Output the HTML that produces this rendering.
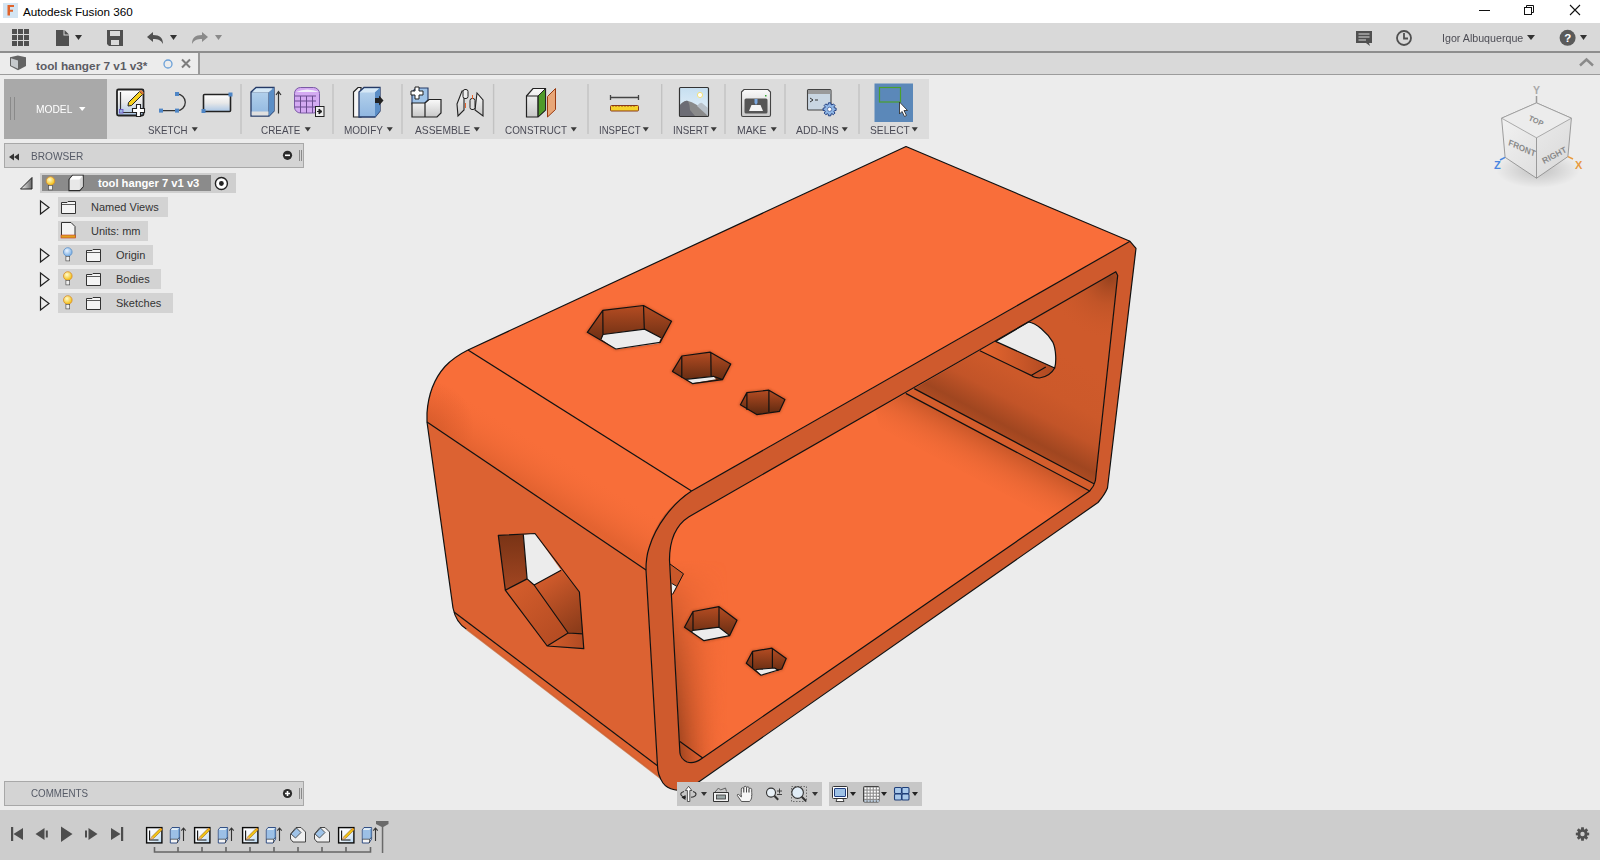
<!DOCTYPE html>
<html><head><meta charset="utf-8">
<style>
*{margin:0;padding:0;box-sizing:border-box}
html,body{width:1600px;height:860px;overflow:hidden;background:#ececec;font-family:"Liberation Sans",sans-serif;position:relative}
.a{position:absolute}
.t{position:absolute;white-space:nowrap;line-height:1}
svg{position:absolute;overflow:visible}
</style></head><body>

<!-- title bar -->
<div class="a" style="left:0;top:0;width:1600px;height:23px;background:#fff"></div>
<!-- toolbar -->
<div class="a" style="left:0;top:23px;width:1600px;height:28px;background:#d9d9d9"></div>
<div class="a" style="left:0;top:51px;width:1600px;height:2px;background:#8e8e8e"></div>
<!-- tab row -->
<div class="a" style="left:0;top:53px;width:1600px;height:21px;background:#d9d9d9"></div>
<div class="a" style="left:0;top:53px;width:198px;height:21px;background:#ececec"></div>
<div class="a" style="left:198px;top:53px;width:2px;height:21px;background:#9a9a9a"></div>
<div class="a" style="left:0;top:74px;width:1600px;height:1px;background:#9c9c9c"></div>

<!-- ribbon -->
<div class="a" style="left:4px;top:79px;width:925px;height:60px;background:#dcdcdc"></div>
<div class="a" style="left:4px;top:79px;width:103px;height:60px;background:#a9a9a9"></div>

<!-- browser header -->
<div class="a" style="left:4px;top:143px;width:300px;height:25px;background:#d4d4d4;border:1px solid #a8a8a8"></div>

<!-- comments -->
<div class="a" style="left:4px;top:781px;width:300px;height:25px;background:#d4d4d4;border:1px solid #a8a8a8"></div>

<!-- timeline -->
<div class="a" style="left:0;top:810px;width:1600px;height:50px;background:#cdcdcd"></div>

<svg width="1600" height="860" viewBox="0 0 1600 860" style="left:0;top:0">
<defs>
<radialGradient id="gFil" gradientUnits="userSpaceOnUse" cx="426" cy="428" r="48">
<stop offset="0" stop-color="#d85b2b"/><stop offset=".5" stop-color="#ea6533"/><stop offset="1" stop-color="#f86e39"/>
</radialGradient>
<linearGradient id="gWall" gradientUnits="userSpaceOnUse" x1="1000" y1="434.3" x2="1047" y2="346">
<stop offset="0" stop-color="#ad4b22"/><stop offset="0.1" stop-color="#a04620"/><stop offset="0.35" stop-color="#c25428"/><stop offset="0.6" stop-color="#cc592a"/><stop offset="1" stop-color="#cf5a2b"/>
</linearGradient>
<linearGradient id="gJun" gradientUnits="userSpaceOnUse" x1="1000" y1="443.5" x2="976" y2="488">
<stop offset="0" stop-color="#c75628" stop-opacity=".95"/><stop offset=".4" stop-color="#dc6130" stop-opacity=".6"/><stop offset="1" stop-color="#f76d38" stop-opacity="0"/>
</linearGradient>
<linearGradient id="gLeftShade" gradientUnits="userSpaceOnUse" x1="676" y1="0" x2="728" y2="0">
<stop offset="0" stop-color="#923e1b"/><stop offset=".4" stop-color="#c05227" stop-opacity=".7"/><stop offset="1" stop-color="#f76d38" stop-opacity="0"/>
</linearGradient>
<linearGradient id="gMaskY" gradientUnits="userSpaceOnUse" x1="0" y1="560" x2="0" y2="760">
<stop offset="0" stop-color="#000"/><stop offset=".3" stop-color="#555"/><stop offset="1" stop-color="#fff"/>
</linearGradient>
<radialGradient id="gCorner" gradientUnits="userSpaceOnUse" cx="1110" cy="278" r="60">
<stop offset="0" stop-color="#8e3e1c" stop-opacity=".85"/><stop offset=".45" stop-color="#a84a22" stop-opacity=".35"/><stop offset="1" stop-color="#c85628" stop-opacity="0"/>
</radialGradient>
<linearGradient id="gStrip" gradientUnits="userSpaceOnUse" x1="980" y1="0" x2="1050" y2="0">
<stop offset="0" stop-color="#e6662f"/><stop offset=".6" stop-color="#c85628"/><stop offset="1" stop-color="#b04a22"/>
</linearGradient>
<linearGradient id="gBh1" gradientUnits="userSpaceOnUse" x1="0" y1="536" x2="0" y2="590"><stop offset="0" stop-color="#7a3416"/><stop offset="1" stop-color="#a34621"/></linearGradient>
<linearGradient id="gBh2" gradientUnits="userSpaceOnUse" x1="512" y1="585" x2="562" y2="642"><stop offset="0" stop-color="#d45d2c"/><stop offset="1" stop-color="#b34b22"/></linearGradient>
<linearGradient id="gBh3" gradientUnits="userSpaceOnUse" x1="548" y1="578" x2="582" y2="628"><stop offset="0" stop-color="#cf5a2b"/><stop offset="1" stop-color="#8c3c1a"/></linearGradient>
<linearGradient id="gBh4" gradientUnits="userSpaceOnUse" x1="550" y1="0" x2="584" y2="0"><stop offset="0" stop-color="#d25c2b"/><stop offset="1" stop-color="#b04a22"/></linearGradient>
<linearGradient id="gFilP" gradientUnits="userSpaceOnUse" x1="580" y1="420.8" x2="535.8" y2="491">
<stop offset="0" stop-color="#f86e39" stop-opacity="0"/><stop offset=".5" stop-color="#f06a36" stop-opacity="0"/><stop offset="1" stop-color="#d65c2b" stop-opacity=".6"/>
</linearGradient>
<mask id="mY" maskUnits="userSpaceOnUse" x="600" y="500" width="200" height="300"><rect x="600" y="500" width="200" height="300" fill="url(#gMaskY)"/></mask>
<linearGradient id="gHex" gradientUnits="userSpaceOnUse" x1="0" y1="0" x2="0" y2="1" >
<stop offset="0" stop-color="#b24a20"/><stop offset="1" stop-color="#5e2a12"/>
</linearGradient>
<linearGradient id="gH1" x1="0" y1="0" x2="0" y2="1"><stop offset="0" stop-color="#b54c22"/><stop offset="1" stop-color="#5a2810"/></linearGradient>
<linearGradient id="gFloor" gradientUnits="userSpaceOnUse" x1="675" y1="700" x2="760" y2="650">
<stop offset="0" stop-color="#b44a20"/><stop offset="1" stop-color="#f56c38" stop-opacity="0"/>
</linearGradient>
<filter id="blr" x="-20%" y="-20%" width="140%" height="140%"><feGaussianBlur stdDeviation="1.3"/></filter>
</defs>

<!-- left face -->
<path d="M427,422 L646,570 L657.5,765.8 L454,612 L453,608 Z" fill="#dc6232"/>
<!-- bottom fillet -->
<path d="M453,608 C455,618 460,625 466.3,629 L661.6,779 L657.5,765.8 L454,612 Z" fill="#dd6331"/>
<path d="M466.3,629 L661.6,779" stroke="#c9602f" stroke-width="1.6" fill="none" opacity=".8"/>
<!-- top fillet -->
<path d="M468,350 L691.6,491 C673,503 656,525 649,548 C646,557 646,564 646,570 L427,422 L427,413 C428,398 433,380 445,366.5 C452,359 460,354 468,350 Z" fill="url(#gFil)"/>
<path d="M468,350 L691.6,491 C673,503 656,525 649,548 C646,557 646,564 646,570 L427,422 L427,413 C428,398 433,380 445,366.5 C452,359 460,354 468,350 Z" fill="url(#gFilP)"/>
<!-- top face -->
<path d="M468,350 L906,146.5 L1130,241.3 L691.6,491 Z" fill="#f96e3a"/>

<!-- ring -->
<path fill-rule="evenodd" fill="#cf5a2d" d="M691.6,491 L1130,241.3 L1136,248.3 L1107.5,488 C1105,494 1101,499 1098,502.5 L688,789 C680,792 668,790 663,783 C659,777 657.5,770 657.5,765.8 L646,570 C646,540 660,510 691.6,491 Z
M689,516.7 C676,525 669.5,540 669.5,560 L679.9,752.8 C680,756 683,760 687,762 C691,763.5 697,762 701.8,758.5 L1089.7,491 C1092,488.5 1094.5,485 1095.4,480.7 L1117.7,275.4 L1115.8,271.7 Z"/>
<!-- interior floor -->
<path fill="#f76d38" d="M689,516.7 C676,525 669.5,540 669.5,560 L679.9,752.8 C680,756 683,760 687,762 C691,763.5 697,762 701.8,758.5 L1089.7,491 C1092,488.5 1094.5,485 1095.4,480.7 L1117.7,275.4 L1115.8,271.7 Z"/>
<path fill="url(#gLeftShade)" mask="url(#mY)" d="M669.5,560 L679.9,752.8 C680,756 683,760 687,762 C691,763.5 697,762 701.8,758.5 L740,732 L730,560 Z"/>
<path fill="url(#gJun)" d="M905.8,393.4 L1089.7,491 L1050,518 L880,428 L875,411 Z"/>
<!-- right wall interior -->
<path fill="url(#gWall)" d="M914.2,388.6 L1115.8,271.7 L1117.7,275.4 L1095.4,480.7 L1093.9,483.7 Z"/>
<path fill="url(#gCorner)" d="M914.2,388.6 L1115.8,271.7 L1117.7,275.4 L1095.4,480.7 L1093.9,483.7 Z"/>
<path fill="#d45d2c" d="M905.8,393.4 L914.2,388.6 L1093.9,483.7 L1089.7,491 Z"/>
<!-- round hole -->
<path fill="#ececec" d="M995.6,341.4 L1028.5,322 C1036,323 1047,332 1053,342.4 C1056,349 1056.5,362 1054.7,368 Z"/>
<path fill="url(#gStrip)" d="M979.9,350.8 L995.6,341.4 L1054.7,368 C1052,373 1046,377 1039.5,378 C1036,378 1033,377 1031.1,375.4 Z"/>

<g fill="none" stroke="#9a3f1a" stroke-width="3" opacity=".45" filter="url(#blr)">
<path d="M587.3,332.3 L602.8,310.4 L643.5,305.5 L671.5,321.3 L660.1,342.4 L615.8,349 Z"/>
<path d="M672.5,371.4 L681.8,356 L710.3,352.2 L730.7,364.1 L722.5,379.6 L692.4,383.6 Z"/>
<path d="M740.4,404.8 L746.9,392.6 L768.9,390.2 L784.9,399.4 L779.5,411.3 L756.7,414.6 Z"/>
<path d="M684.5,627.2 L693,611.5 L719,606.7 L737,620.2 L729.7,635.6 L704,640.7 Z"/>
<path d="M746.3,663.3 L752.6,651.3 L772,648.2 L786.2,658.6 L781.8,669 L761,675.2 Z"/>
</g>
<!-- top hex 1 -->
<path fill="url(#gH1)" d="M587.3,332.3 L602.8,310.4 L643.5,305.5 L671.5,321.3 L660.1,342.4 L615.8,349 Z"/>
<path fill="#ececec" d="M603,334.5 L644.6,329.1 L660.9,337.7 L658.7,343.5 L615.5,349.2 L601.1,339 Z"/>
<!-- top hex 2 -->
<path fill="url(#gH1)" d="M672.5,371.4 L681.8,356 L710.3,352.2 L730.7,364.1 L722.5,379.6 L692.4,383.6 Z"/>
<path fill="#ececec" d="M685.9,379.3 L713.5,376.3 L716,379.3 L692.4,383.2 Z"/>
<!-- top hex 3 -->
<path fill="url(#gH1)" d="M740.4,404.8 L746.9,392.6 L768.9,390.2 L784.9,399.4 L779.5,411.3 L756.7,414.6 Z"/>

<!-- floor hex 1 -->
<path fill="url(#gH1)" d="M684.5,627.2 L693,611.5 L719,606.7 L737,620.2 L729.7,635.6 L704,640.7 Z"/>
<path fill="#ececec" d="M691.4,631.9 L693,630.3 L719,627.2 L729.7,635.6 L704,640.7 Z"/>
<!-- floor hex 2 -->
<path fill="url(#gH1)" d="M746.3,663.3 L752.6,651.3 L772,648.2 L786.2,658.6 L781.8,669 L761,675.2 Z"/>
<path fill="#ececec" d="M755.8,669.5 L774.6,668 L778.7,670.5 L761,675.2 Z"/>

<!-- big hex left face -->
<path fill="url(#gBh1)" d="M498.3,535.3 L523.3,534.4 L527.1,578.9 L505.3,590.2 Z"/>
<path fill="#ececec" d="M523.3,534.4 L535,533.5 L561.1,570.2 L534.1,585 L527.1,578.9 Z"/>
<path fill="url(#gBh2)" d="M505.3,590.2 L527.1,578.9 L534.1,585 L568.1,633 L547.2,646 Z"/>
<path fill="url(#gBh3)" d="M534.1,585 L561.1,570.2 L579.4,592 L582.9,633.8 L568.1,633 Z"/>
<path fill="url(#gBh4)" d="M547.2,646 L568.1,633 L582.9,633.8 L583.8,648.7 Z"/>

<!-- notch -->
<path fill="#c9582a" d="M670,564 L683.5,573.8 L675.7,591 L672,594 Z"/>
<path fill="#ececec" d="M671.6,583.3 L676.6,586.3 L672.4,594 L671.9,592 Z"/>

<!-- EDGE LINES -->
<g fill="none" stroke="#111" stroke-width="1.2" stroke-linejoin="round">
<path d="M468,350 L906,146.5 L1130,241.3 L1136,248.3 L1107.5,488 C1105,494 1101,499 1098,502.5 L690,788"/>
<path d="M468,350 L691.6,491"/>
<path d="M427,422 L646,570"/>
<path d="M468,350 C460,354 452,359 445,366.5 C433,380 428,398 427,413 L427,422 L453,608 C455,618 460,625 466.3,629"/>
<path d="M454,612 L657.5,765.8"/>
<path d="M691.6,491 L1130,241.3"/>
<path d="M691.6,491 C673,503 656,525 649,548 C646,557 646,564 646,570 L657.5,765.8 C657.5,770 659,777 663,783 C668,790 680,792 688,789"/>
<path d="M689,516.7 C676,525 669.5,540 669.5,560 L679.9,752.8 C680,756 683,760 687,762 C691,763.5 697,762 701.8,758.5 L1089.7,491 C1092,488.5 1094.5,485 1095.4,480.7 L1117.7,275.4 L1115.8,271.7 Z"/>
<path d="M905.8,393.4 L1089.7,491 M914.2,388.6 L1093.9,483.7"/>
<path d="M679.9,741.4 L702.7,758"/>
<path d="M670,564 L683.5,573.8 L672.6,594.5 M671.6,583.3 L676.6,586.3" stroke-width="1"/>
<path d="M995.6,341.4 L1028.5,322 C1036,323 1047,332 1053,342.4 C1056,349 1056.5,362 1054.7,368 Z"/>
<path d="M979.9,350.8 L1031.1,375.4 C1033,377 1036,378 1039.5,378 C1046,377 1052,373 1054.7,368 M1031.1,375.4 L1045.8,367"/>
<path d="M587.3,332.3 L602.8,310.4 L643.5,305.5 L671.5,321.3 L660.1,342.4 L615.8,349 Z M602.8,310.4 L603,334.5 M643.5,305.5 L644.3,329 M601.1,339 L603,334.5 L644.6,329.1 L660.9,337.7"/>
<path d="M672.5,371.4 L681.8,356 L710.3,352.2 L730.7,364.1 L722.5,379.6 L692.4,383.6 Z M681.8,356 L681.8,378 M710.8,352.2 L711.1,376.3 M685.9,379.3 L713.5,376.3 L722.5,379.6"/>
<path d="M740.4,404.8 L746.9,392.6 L768.9,390.2 L784.9,399.4 L779.5,411.3 L756.7,414.6 Z M746.9,392.6 L746.9,410 M768.9,390.2 L768.9,412"/>
<path d="M684.5,627.2 L693,611.5 L719,606.7 L737,620.2 L729.7,635.6 L704,640.7 Z M693,611.5 L693,630.3 M719,606.7 L719,627.2 M691.4,631.9 L693,630.3 L719,627.2 L729.7,635.6"/>
<path d="M746.3,663.3 L752.6,651.3 L772,648.2 L786.2,658.6 L781.8,669 L761,675.2 Z M752.6,651.3 L752.6,668.5 M772.4,648.2 L772.4,668 M755.8,669.5 L774.6,668 L778.7,670.5"/>
<path d="M498.3,535.3 L535,533.5 L579.4,592 L583.8,648.7 L547.2,646 L505.3,590.2 Z M523.3,534.4 L527.1,578.9 L505.3,590.2 M527.1,578.9 L534.1,585 L561.1,570.2 M534.1,585 L568.1,633 L547.2,646 M568.1,633 L582.9,633.8"/>
</g>
</svg>


<!-- title bar content -->
<svg style="left:0;top:0" width="1600" height="23">
<rect x="3" y="3" width="15" height="15" fill="#d3e5f3"/>
<path d="M7.5,5 L14,5 L14,7 L10,7 L10,9.8 L13,9.8 L13,11.8 L10,11.8 L10,15.5 L7.5,15.5 Z" fill="#e0642c"/>
<path d="M1479,10.5 H1490" stroke="#111" stroke-width="1"/>
<rect x="1524.5" y="7.5" width="7" height="7" fill="none" stroke="#111" stroke-width="1"/>
<path d="M1526.5,7.5 V5.5 H1533.5 V12.5 H1531.5" fill="none" stroke="#111" stroke-width="1"/>
<path d="M1570,5 L1580,15 M1580,5 L1570,15" stroke="#111" stroke-width="1.1"/>
</svg>
<div class="t" style="left:23px;top:5.8px;font-size:11.7px;color:#000">Autodesk Fusion 360</div>

<!-- toolbar icons -->
<svg style="left:0;top:23px" width="1600" height="30">
<g fill="#505050">
<rect x="12" y="6" width="5" height="5"/><rect x="18" y="6" width="5" height="5"/><rect x="24" y="6" width="5" height="5"/>
<rect x="12" y="12" width="5" height="5"/><rect x="18" y="12" width="5" height="5"/><rect x="24" y="12" width="5" height="5"/>
<rect x="12" y="18" width="5" height="5"/><rect x="18" y="18" width="5" height="5"/><rect x="24" y="18" width="5" height="5"/>
<path d="M56,7 H63.5 V12.5 H69 V23 H56 Z"/><path d="M64.5,7 L69,11.5 H64.5 Z"/>
<path d="M75,12 H82 L78.5,17 Z" fill="#333"/>
<path d="M107,7 H123 V23 H109 L107,21 Z"/>
<path d="M147,14 L153,9 V12 C160,12 163,15 163,21 C161,17 158,16 153,16 V19 Z"/>
<path d="M170,12 H177 L173.5,17 Z" fill="#333"/>
</g>
<rect x="110" y="8" width="10" height="5" fill="#d9d9d9"/>
<rect x="111" y="17" width="8" height="5" fill="#d9d9d9"/>
<path d="M208,14 L202,9 V12 C195,12 192,15 192,21 C194,17 197,16 202,16 V19 Z" fill="#8a8a8a"/>
<path d="M215,12 H222 L218.5,17 Z" fill="#8a8a8a"/>
<!-- right side -->
<path d="M1356,8 H1372 V20 H1369 L1370,23 L1366,20 H1356 Z" fill="#505050"/>
<path d="M1358.5,11 H1369.5 M1358.5,14 H1369.5 M1358.5,17 H1366" stroke="#d9d9d9" stroke-width="1.2"/>
<circle cx="1404" cy="15" r="7" fill="none" stroke="#505050" stroke-width="1.8"/>
<path d="M1404,10 V15.5 H1408" fill="none" stroke="#505050" stroke-width="1.8"/>
<path d="M1527,12 H1535 L1531,17 Z" fill="#333"/>
<circle cx="1567.6" cy="14.8" r="8" fill="#5a5a5a"/>
<path d="M1580,12 H1587 L1583.5,17 Z" fill="#333"/>
</svg>
<div class="t" style="left:1564.3px;top:32.5px;font-size:11.5px;font-weight:700;color:#fff">?</div>
<div class="t" style="left:1441.5px;top:33px;font-size:11px;color:#4d4d55;transform:scaleX(.97);transform-origin:0 0">Igor Albuquerque</div>

<!-- tab row -->
<svg style="left:0;top:53px" width="1600" height="22">
<path d="M10,4.3 L17.8,2.6 L26,4.3 V13 L18,17.2 L10,13 Z" fill="#646464"/>
<path d="M11,5.3 L18,7.6 V15.8 L11,12.4 Z" fill="#c6c9cc"/>
<circle cx="168" cy="11" r="4" fill="none" stroke="#6aa0d8" stroke-width="1.3"/>
<path d="M182,6.5 L190,14.5 M190,6.5 L182,14.5" stroke="#7d7d7d" stroke-width="2"/>
<path d="M1580,12.5 L1586.5,6.5 L1593,12.5" fill="none" stroke="#8a8a8a" stroke-width="2.4"/>
</svg>
<div class="t" style="left:36px;top:61px;font-size:11.8px;font-weight:700;color:#5b5b63">tool hanger 7 v1 v3*</div>

<!-- ribbon labels/separators -->
<svg style="left:0;top:79px" width="940" height="60">
<path d="M10.5,18 V41 M14.5,18 V41" stroke="#8a8a8a" stroke-width="1"/>
<path d="M79,28 H85.5 L82.2,32 Z" fill="#fff"/>
<g stroke="#c2c2c2" stroke-width="1.4">
<path d="M241,5 V55 M333,5 V55 M402,5 V55 M493.6,5 V55 M588,5 V55 M661.7,5 V55 M725,5 V55 M785,5 V55 M859,5 V55"/>
</g>
<g fill="#3a3a3a">
<path d="M191.7,48.3 H197.8 L194.75,52.6 Z"/><path d="M304.7,48.3 H310.8 L307.75,52.6 Z"/><path d="M386.7,48.3 H392.8 L389.75,52.6 Z"/>
<path d="M473.7,48.3 H479.8 L476.75,52.6 Z"/><path d="M570.7,48.3 H576.8 L573.75,52.6 Z"/><path d="M642.7,48.3 H648.8 L645.75,52.6 Z"/>
<path d="M710.7,48.3 H716.8 L713.75,52.6 Z"/><path d="M770.7,48.3 H776.8 L773.75,52.6 Z"/><path d="M841.7,48.3 H847.8 L844.75,52.6 Z"/>
<path d="M911.7,48.3 H917.8 L914.75,52.6 Z"/>
</g>
<rect x="874.5" y="4.5" width="38.5" height="38.5" fill="#5b88b9"/>
</svg>
<div class="t" style="left:36px;top:104px;font-size:11px;color:#fff;transform:scaleX(.93);transform-origin:0 0">MODEL</div>
<div style="position:absolute;left:0;top:124.7px;font-size:11px;color:#4a4a55;white-space:nowrap;line-height:1">
<span class="t" style="left:148px;transform:scaleX(0.885);transform-origin:0 0">SKETCH</span>
<span class="t" style="left:261px;transform:scaleX(0.9);transform-origin:0 0">CREATE</span>
<span class="t" style="left:344px;transform:scaleX(0.91);transform-origin:0 0">MODIFY</span>
<span class="t" style="left:415px;transform:scaleX(0.935);transform-origin:0 0">ASSEMBLE</span>
<span class="t" style="left:505px;transform:scaleX(0.897);transform-origin:0 0">CONSTRUCT</span>
<span class="t" style="left:599px;transform:scaleX(0.87);transform-origin:0 0">INSPECT</span>
<span class="t" style="left:673px;transform:scaleX(0.89);transform-origin:0 0">INSERT</span>
<span class="t" style="left:737px;transform:scaleX(0.944);transform-origin:0 0">MAKE</span>
<span class="t" style="left:796px;transform:scaleX(0.946);transform-origin:0 0">ADD-INS</span>
<span class="t" style="left:870px;transform:scaleX(0.93);transform-origin:0 0">SELECT</span>
</div>

<svg style="left:0;top:0" width="940" height="140">
<defs>
<linearGradient id="gSk" x1="0" y1="0" x2="0" y2="1"><stop offset="0" stop-color="#fff"/><stop offset=".5" stop-color="#e8e8e8"/><stop offset="1" stop-color="#a9c6e6"/></linearGradient>
<linearGradient id="gBlue" x1="0" y1="0" x2="0" y2="1"><stop offset="0" stop-color="#b9d5ee"/><stop offset="1" stop-color="#8fb6e0"/></linearGradient>
<linearGradient id="gWh" x1="0" y1="0" x2="0" y2="1"><stop offset="0" stop-color="#fafafa"/><stop offset="1" stop-color="#c8c8c8"/></linearGradient>
<linearGradient id="gSky" x1="0" y1="0" x2="0" y2="1"><stop offset="0" stop-color="#c6dff0"/><stop offset="1" stop-color="#e6f1fa"/></linearGradient>
</defs>
<!-- create sketch -->
<rect x="117" y="89.5" width="26.5" height="26" rx="1.5" fill="url(#gSk)" stroke="#222" stroke-width="1.8"/>
<path d="M120.5,92 V112.5 H132" fill="none" stroke="#333" stroke-width="1.2"/>
<rect x="119.5" y="109.5" width="3.5" height="3.5" fill="#9bb6e0" stroke="#6a4cc0" stroke-width=".8"/>
<path d="M128.5,102.5 L139.5,91.5 L142.5,94.5 L131.5,105.5 L128,106 Z" fill="#f5d01e" stroke="#222" stroke-width="1"/>
<path d="M139.5,91.5 L141,90 L144,93 L142.5,94.5 Z" fill="#e07b39"/>
<path d="M136.5,104.5 H140.5 V108.5 H144.5 V112.5 H140.5 V116.5 H136.5 V112.5 H132.5 V108.5 H136.5 Z" fill="#fff" stroke="#222" stroke-width="1.1"/>
<!-- line arc -->
<path d="M161,110.6 H177 M177,94 A8.3,8.3 0 0 1 177,110.6" fill="none" stroke="#333" stroke-width="1.3"/>
<rect x="159" y="108.6" width="4" height="4" fill="#4f86c6"/><rect x="175" y="108.6" width="4" height="4" fill="#4f86c6"/><rect x="175" y="92" width="4" height="4" fill="#4f86c6"/>
<!-- rect -->
<rect x="203.5" y="94.5" width="27" height="17" rx="1" fill="url(#gSk)" stroke="#222" stroke-width="1.6"/>
<rect x="201.5" y="109" width="4" height="4" fill="#4f86c6"/><rect x="228.5" y="92.5" width="4" height="4" fill="#4f86c6"/>
<!-- extrude -->
<path d="M251,92 L256,87.5 H274 V111 L269,116 H251 Z" fill="url(#gBlue)" stroke="#253a66" stroke-width="1.3"/>
<path d="M251,92 H269 L274,87.5 M269,92 V116" fill="none" stroke="#253a66" stroke-width="1"/>
<path d="M269,92 L274,87.5 V111 L269,116 Z" fill="#5b8ec6"/>
<path d="M252,92.6 L256.5,88.5 H273 L268.5,92.6 Z" fill="#d6e8f6"/>
<rect x="251.7" y="111.5" width="16.7" height="4" fill="#e0e0e0"/>
<path d="M278.5,91.5 V113.5 M276,95 L278.5,91.5 L281,95" fill="none" stroke="#333" stroke-width="1.2"/>
<!-- form -->
<rect x="294.5" y="87.5" width="25" height="25.5" rx="6" fill="#d4aaf2" stroke="#7b5aa6" stroke-width="1"/>
<path d="M296,92 Q307,87 319,92" fill="#f0f0f8"/>
<path d="M300.5,96 V113 M306.5,96 V113 M312.5,96 V113 M294.5,101 H316 M294.5,107 H316 M295,96 H316" stroke="#6b4c90" stroke-width="1"/>
<rect x="315.5" y="106.5" width="8.5" height="10" fill="#eee" stroke="#222" stroke-width="1"/>
<path d="M317,111.5 H320.5 M319,109 L322,111.5 L319,114 Z" fill="#222" stroke="#222" stroke-width="1"/>
<!-- modify -->
<path d="M353.5,92 L358,87.5 H361 V117 H353.5 Z" fill="#f5f5f5" stroke="#222" stroke-width="1.2"/>
<path d="M359,92 L364,87.5 H380 V111 L375,117 H359 Z" fill="url(#gBlue)" stroke="#253a66" stroke-width="1.3"/>
<path d="M375,92 L380,87.5 V111 L375,117 Z" fill="#5b8ec6"/>
<path d="M360,92.6 L364.5,88.5 H379 L374.5,92.6 Z" fill="#d6e8f6"/>
<path d="M375,98 H379 V95.5 L383.5,100.5 L379,105.5 V103 H375 Z" fill="#222"/>
<!-- assemble -->
<path d="M412,92 L416,88 H428 V100 L424,104 H412 Z" fill="#9fc3e8" stroke="#253a66" stroke-width="1.1"/>
<path d="M412,103 H425 V117 H412 Z M425,103 L429,99.5 H441 V113 L437,117 H425" fill="url(#gWh)" stroke="#222" stroke-width="1.2"/>
<path d="M415,87 H419 V91 H423 V95 H419 V99 H415 V95 H411 V91 H415 Z" fill="#fff" stroke="#222" stroke-width="1"/>
<path d="M457,104 L462,91 H464 V110 L458,116 Z" fill="url(#gWh)" stroke="#222" stroke-width="1.1"/>
<rect x="463" y="89.5" width="5" height="9" rx="2" fill="#eee" stroke="#222" stroke-width="1"/>
<path d="M477,93 L483,100 V116 L475,110 Z" fill="url(#gWh)" stroke="#222" stroke-width="1.1"/>
<rect x="470" y="98.5" width="5" height="11" rx="2" fill="#ddd" stroke="#222" stroke-width="1"/>
<path d="M465.5,103 V108 M472.5,95 V99" stroke="#e8642c" stroke-width="1"/>
<!-- construct -->
<path d="M526.5,96 L533,88.5 H545.5 V110 L538,117 H526.5 Z" fill="url(#gWh)" stroke="#222" stroke-width="1.2"/>
<path d="M538,96 L545.5,88.5 V110 L538,117 Z" fill="#4f9a2a" stroke="#222" stroke-width="1"/>
<path d="M526.5,96 H538 V117" fill="none" stroke="#222" stroke-width="1"/>
<path d="M547.5,96.5 L555.5,88.5 V109.5 L547.5,117 Z" fill="#e8a677" stroke="#9a3a10" stroke-width="1"/>
<!-- inspect -->
<path d="M610.5,97.5 H638.5 M610.5,95 V100 M638.5,95 V100" stroke="#444" stroke-width="1.3"/>
<rect x="610.5" y="105.5" width="28" height="5.5" rx="1" fill="#f6d22a" stroke="#8a3a1a" stroke-width="1"/>
<path d="M613,105.5 V107 M616,105.5 V107 M619,105.5 V107 M622,105.5 V107 M625,105.5 V107 M628,105.5 V107 M631,105.5 V107 M634,105.5 V107" stroke="#8a3a1a" stroke-width=".8"/>
<!-- insert -->
<rect x="679.5" y="87.5" width="29" height="29" rx="1" fill="url(#gSky)" stroke="#333" stroke-width="1.2"/>
<circle cx="700" cy="95" r="2.6" fill="#fff" stroke="#f3e27a" stroke-width="1"/>
<path d="M680,116 V105 Q685,100 688,101 Q695,102 708,114 V116 Z" fill="#8a8a8a"/>
<path d="M680,116 V105 Q685,100 688,101 Q690,105 690,110 L695,116 Z" fill="#6c6c74"/>
<path d="M697,106 Q700,102 702,103 L708,108 V116 Z" fill="#b8c0c8"/>
<!-- make -->
<path d="M741.5,92 L744,89.5 H768 L770.5,92 V115 Q770.5,116.5 769,116.5 H743 Q741.5,116.5 741.5,115 Z" fill="url(#gWh)" stroke="#444" stroke-width="1.1"/>
<rect x="744.5" y="98.5" width="23" height="15" rx="1.5" fill="#555"/>
<path d="M749,111 L751.5,105 H760.5 L763,111 Z" fill="#f4f4f4"/>
<path d="M754.5,99 H757.5 V103 L756,105 L754.5,103 Z" fill="#7aa8e0"/>
<rect x="765" y="95" width="1.5" height="1.5" fill="#3a3"/>
<!-- addins -->
<rect x="807.5" y="89.5" width="23.5" height="20.5" rx="1" fill="#c9d6e2" stroke="#444" stroke-width="1.1"/>
<rect x="808" y="90" width="22.5" height="4" fill="#9a9a9a"/>
<path d="M810,98 L813,100 L810,102 M815,100 H818" fill="none" stroke="#333" stroke-width="1"/>
<path d="M834.40,107.91 L836.10,108.14 L836.10,110.46 L834.40,110.69 L833.98,111.71 L835.01,113.07 L833.37,114.71 L832.01,113.68 L830.99,114.10 L830.76,115.80 L828.44,115.80 L828.21,114.10 L827.19,113.68 L825.83,114.71 L824.19,113.07 L825.22,111.71 L824.80,110.69 L823.10,110.46 L823.10,108.14 L824.80,107.91 L825.22,106.89 L824.19,105.53 L825.83,103.89 L827.19,104.92 L828.21,104.50 L828.44,102.80 L830.76,102.80 L830.99,104.50 L832.01,104.92 L833.37,103.89 L835.01,105.53 L833.98,106.89 Z" fill="#8fb6e6" stroke="#223f80" stroke-width="1"/>
<circle cx="829.6" cy="109.3" r="2.1" fill="#fff" stroke="#223f80" stroke-width=".6"/>
<!-- select -->
<rect x="879.5" y="87.5" width="21" height="14.5" fill="none" stroke="#4aa02c" stroke-width="1.2"/>
<path d="M899.5,102 V114 L902,111.5 L904.5,116.5 L906.5,115.5 L904,110.5 H907.5 Z" fill="#fff" stroke="#333" stroke-width=".9"/>
</svg>


<!-- browser header -->
<svg style="left:0;top:143px" width="310" height="26">
<path d="M9,14 L14,10.5 V17.5 Z M14,14 L19,10.5 V17.5 Z" fill="#333"/>
<circle cx="287.5" cy="12.3" r="4.6" fill="#2b2b2b"/>
<path d="M285,12.3 H290" stroke="#fff" stroke-width="1.6"/>
<path d="M299.5,7 V18 M301.5,7 V18" stroke="#8a8a8a" stroke-width="1"/>
</svg>
<div class="t" style="left:31px;top:151px;font-size:11px;color:#555a66;transform:scaleX(.92);transform-origin:0 0">BROWSER</div>

<!-- tree -->
<div class="a" style="left:40px;top:173px;width:196px;height:20px;background:#cfcfcf"></div>
<div class="a" style="left:42px;top:175px;width:169px;height:16px;background:#8b8b8b"></div>
<div class="a" style="left:58px;top:197px;width:110px;height:20px;background:#d3d3d3"></div>
<div class="a" style="left:58px;top:221px;width:90px;height:20px;background:#d3d3d3"></div>
<div class="a" style="left:58px;top:245px;width:95px;height:20px;background:#d3d3d3"></div>
<div class="a" style="left:58px;top:269px;width:103px;height:20px;background:#d3d3d3"></div>
<div class="a" style="left:58px;top:293px;width:115px;height:20px;background:#d3d3d3"></div>
<svg style="left:0;top:170px" width="240" height="150">
<defs><linearGradient id="gTri" x1="0" y1="0" x2="1" y2="0"><stop offset="0" stop-color="#fff"/><stop offset="1" stop-color="#666"/></linearGradient>
<radialGradient id="gBulb" cx=".4" cy=".35" r=".6"><stop offset="0" stop-color="#fffbd0"/><stop offset="1" stop-color="#f2c21c"/></radialGradient>
<radialGradient id="gBulbB" cx=".4" cy=".35" r=".6"><stop offset="0" stop-color="#eef6ff"/><stop offset="1" stop-color="#7fb2e6"/></radialGradient>
</defs>
<path d="M20.5,19 L32,7.5 V19 Z" fill="url(#gTri)" stroke="#222" stroke-width="1"/>
<circle cx="50.5" cy="11" r="4.3" fill="url(#gBulb)" stroke="#d88b2a" stroke-width=".8"/>
<rect x="48.6" y="15.3" width="3.8" height="4.6" fill="#eee" stroke="#444" stroke-width=".6"/>
<path d="M69,9.6 L72.5,5.2 H83.2 V16.5 L79.7,20.6 H69 Z" fill="#e8e8e8" stroke="#2a2a2a" stroke-width="1.1"/>
<path d="M69.5,9.4 L72.7,5.7 H82.7 L79.5,9.4 Z" fill="#fff"/>
<path d="M79.9,9.6 L82.7,6 V16.3 L79.9,19.8 Z" fill="#d6d6d6"/>
<circle cx="221.4" cy="13.5" r="6" fill="#fff" stroke="#222" stroke-width="1.4"/>
<circle cx="221.4" cy="13.5" r="2.4" fill="#222"/>
<g fill="none" stroke="#222" stroke-width="1.2">
<path d="M40.5,31 L49,37.5 L40.5,44 Z"/>
<path d="M40.5,79 L49,85.5 L40.5,92 Z"/>
<path d="M40.5,103 L49,109.5 L40.5,116 Z"/>
<path d="M40.5,127 L49,133.5 L40.5,140 Z"/>
</g>
<g fill="#f4f4f4" stroke="#333" stroke-width="1">
<path d="M61.5,32.5 H67 L68,31.5 H75.5 V43.5 H61.5 Z"/>
<path d="M86.5,80.5 H92 L93,79.5 H100.5 V91.5 H86.5 Z"/>
<path d="M86.5,104.5 H92 L93,103.5 H100.5 V115.5 H86.5 Z"/>
<path d="M86.5,128.5 H92 L93,127.5 H100.5 V139.5 H86.5 Z"/>
</g>
<path d="M61.5,34.5 H75.5 M86.5,82.5 H100.5 M86.5,106.5 H100.5 M86.5,130.5 H100.5" stroke="#333" stroke-width=".8"/>
<path d="M61.5,52.5 H71 L75,56.5 V67.5 H61.5 Z" fill="#f4f4f4" stroke="#333" stroke-width="1"/>
<rect x="61" y="65" width="14.5" height="3" fill="#e0a020" stroke="#c0392b" stroke-width=".6"/>
<circle cx="67.8" cy="82" r="4.3" fill="url(#gBulbB)" stroke="#5a8fc8" stroke-width=".8"/><rect x="65.9" y="86.3" width="3.8" height="4.6" fill="#eee" stroke="#444" stroke-width=".6"/>
<circle cx="67.8" cy="106" r="4.3" fill="url(#gBulb)" stroke="#d88b2a" stroke-width=".8"/><rect x="65.9" y="110.3" width="3.8" height="4.6" fill="#eee" stroke="#444" stroke-width=".6"/>
<circle cx="67.8" cy="130" r="4.3" fill="url(#gBulb)" stroke="#d88b2a" stroke-width=".8"/><rect x="65.9" y="134.3" width="3.8" height="4.6" fill="#eee" stroke="#444" stroke-width=".6"/>
</svg>
<div class="t" style="left:98px;top:178px;font-size:11.2px;font-weight:700;color:#fff">tool hanger 7 v1 v3</div>
<div class="t" style="left:91px;top:202px;font-size:11px;color:#333">Named Views</div>
<div class="t" style="left:91px;top:226px;font-size:11px;color:#333">Units: mm</div>
<div class="t" style="left:116px;top:250px;font-size:11px;color:#333">Origin</div>
<div class="t" style="left:116px;top:274px;font-size:11px;color:#333">Bodies</div>
<div class="t" style="left:116px;top:298px;font-size:11px;color:#333">Sketches</div>

<!-- comments -->
<svg style="left:0;top:781px" width="310" height="26">
<circle cx="287.5" cy="12.5" r="4.6" fill="#2b2b2b"/>
<path d="M285,12.5 H290 M287.5,10 V15" stroke="#fff" stroke-width="1.6"/>
<path d="M299.5,7 V18 M301.5,7 V18" stroke="#8a8a8a" stroke-width="1"/>
</svg>
<div class="t" style="left:31px;top:788.3px;font-size:11px;color:#555a66;transform:scaleX(.89);transform-origin:0 0">COMMENTS</div>

<div class="a" style="left:677px;top:782px;width:145px;height:24px;background:#c7c7c7"></div>
<div class="a" style="left:829px;top:782px;width:93px;height:24px;background:#c7c7c7"></div>
<svg style="left:0;top:0" width="940" height="860">
<!-- orbit -->
<path d="M686,797.2 C680,796.5 679,793 684,791.5 M693,791.5 C697.5,792.8 697,796.5 691,797.3" fill="none" stroke="#333" stroke-width="1.1"/>
<path d="M681.5,797.5 L685.5,795 V800 Z" fill="#222"/>
<path d="M687.4,801.5 V790.5 H685.3 L688.6,786.3 L691.9,790.5 H689.8 V801.5 Z" fill="#fff" stroke="#333" stroke-width=".8"/>
<path d="M701,792 H707 L704,796 Z" fill="#333"/>
<!-- look at -->
<path d="M713.5,792.5 H728.5 V801.5 H713.5 Z" fill="#f2f2f2" stroke="#333" stroke-width="1"/>
<rect x="716.5" y="795" width="9" height="4" fill="#9aa5a5" stroke="#333" stroke-width=".8"/>
<path d="M715,792 L718.5,788 L720.5,790 L725.5,788 L726.5,791.5" fill="none" stroke="#555" stroke-width=".9"/>
<!-- pan -->
<g fill="#f6f6f6" stroke="#333" stroke-width=".8">
<rect x="741.3" y="787.8" width="2.6" height="8" rx="1.3"/>
<rect x="743.9" y="786.3" width="2.6" height="9" rx="1.3"/>
<rect x="746.5" y="786.8" width="2.6" height="9" rx="1.3"/>
<rect x="749.1" y="788.3" width="2.6" height="8" rx="1.3"/>
<path d="M741.3,794 V797 L738.8,794.6 C737.8,793.8 736.8,794.8 737.5,795.8 L741.5,801.5 H749.5 C751,800 751.7,798.5 751.7,796.5 V793.5 H741.3 Z"/>
</g>
<rect x="741.7" y="792.5" width="9.6" height="2.5" fill="#f6f6f6"/>
<!-- zoom -->
<circle cx="771" cy="792.6" r="4.5" fill="#e8f0f6" stroke="#333" stroke-width="1.1"/>
<path d="M774.5,796 L778.2,799.8" stroke="#333" stroke-width="2"/>
<path d="M777,791 H782 M779.5,788.5 V793.5 M777,794.5 H782" stroke="#333" stroke-width=".9"/>
<!-- fit -->
<rect x="791.5" y="786.5" width="15" height="15" fill="none" stroke="#555" stroke-width=".8" stroke-dasharray="1.5 1.5"/>
<circle cx="797.6" cy="792.6" r="5.8" fill="#e0ecf6" stroke="#333" stroke-width="1.1"/>
<path d="M801.7,796.7 L806,801" stroke="#333" stroke-width="2"/>
<path d="M812,792 H818 L815,796 Z" fill="#333"/>
<!-- display -->
<rect x="832.5" y="786.5" width="15" height="12" rx="1" fill="#fff" stroke="#333" stroke-width="1"/>
<rect x="834.5" y="788.5" width="11" height="8" rx=".5" fill="#9ec2e6" stroke="#223f80" stroke-width="1"/>
<path d="M837,799 L836,801.5 H844 L843,799" fill="#fff" stroke="#333" stroke-width=".9"/>
<path d="M850,792 H856 L853,796 Z" fill="#222"/>
<!-- grid -->
<rect x="863.5" y="786.5" width="15.5" height="15.5" rx="1" fill="#8a8a8a" stroke="#444" stroke-width="1"/>
<g fill="#fff">
<rect x="864.5" y="787.5" width="2" height="2"/><rect x="867.6" y="787.5" width="2" height="2"/><rect x="870.7" y="787.5" width="2" height="2"/><rect x="873.8" y="787.5" width="2" height="2"/><rect x="876.9" y="787.5" width="2" height="2"/>
<rect x="864.5" y="790.6" width="2" height="2"/><rect x="867.6" y="790.6" width="2" height="2"/><rect x="870.7" y="790.6" width="2" height="2"/><rect x="873.8" y="790.6" width="2" height="2"/><rect x="876.9" y="790.6" width="2" height="2"/>
<rect x="864.5" y="793.7" width="2" height="2"/><rect x="867.6" y="793.7" width="2" height="2"/><rect x="870.7" y="793.7" width="2" height="2"/><rect x="873.8" y="793.7" width="2" height="2"/><rect x="876.9" y="793.7" width="2" height="2"/>
<rect x="864.5" y="796.8" width="2" height="2"/><rect x="867.6" y="796.8" width="2" height="2"/><rect x="870.7" y="796.8" width="2" height="2"/><rect x="873.8" y="796.8" width="2" height="2"/><rect x="876.9" y="796.8" width="2" height="2"/>
<rect x="864.5" y="799.9" width="2" height="2" fill="#bcd"/><rect x="867.6" y="799.9" width="2" height="2" fill="#bcd"/><rect x="870.7" y="799.9" width="2" height="2" fill="#bcd"/><rect x="873.8" y="799.9" width="2" height="2" fill="#bcd"/><rect x="876.9" y="799.9" width="2" height="2" fill="#bcd"/>
</g>
<path d="M881,792 H887 L884,796 Z" fill="#222"/>
<!-- viewports -->
<g fill="#a8c8ea" stroke="#1f3f7a" stroke-width="1.1">
<rect x="894.5" y="787.5" width="7" height="6" rx="1"/><rect x="902" y="787.5" width="7" height="6" rx="1"/>
<rect x="894.5" y="794" width="7" height="6" rx="1"/><rect x="902" y="794" width="7" height="6" rx="1"/>
</g>
<path d="M912,792 H918 L915,796 Z" fill="#222"/>
</svg>

<svg style="left:0;top:810px" width="1600" height="50">
<g fill="#4d4d4d">
<rect x="11" y="17" width="2.2" height="14"/><path d="M23,18 V30 L13.5,24 Z"/>
<path d="M35.5,24 L44.5,18 V30 Z"/><rect x="45.8" y="20.5" width="2" height="7"/>
<path d="M61,16.5 L72.5,24 L61,32 Z"/>
<rect x="85" y="20.5" width="2" height="7"/><path d="M88.5,18 L97.5,24 L88.5,30 Z"/>
<path d="M111,18 L120.5,24 L111,30 Z"/><rect x="121" y="17" width="2.2" height="14"/>
</g>
<defs>
<linearGradient id="gTs" x1="0" y1="0" x2="0" y2="1"><stop offset="0" stop-color="#fff"/><stop offset="1" stop-color="#b9d4ee"/></linearGradient>
</defs>
<defs>
<linearGradient id="gTs2" x1="0" y1="0" x2="1" y2="1"><stop offset="0" stop-color="#fff"/><stop offset=".45" stop-color="#f4f8fc"/><stop offset="1" stop-color="#b6d6f0"/></linearGradient>
</defs>
<g id="tsk">
<rect x="146.6" y="17.6" width="15.3" height="15.3" fill="url(#gTs2)" stroke="#0a0a0a" stroke-width="1.4"/>
<path d="M149.6,20.5 V30 H158.5" fill="none" stroke="#111" stroke-width="1.1"/>
<path d="M150.2,29.6 L152,26.5 L159.5,19 L161.3,20.8 L153.8,28.3 Z" fill="#f3c414" stroke="#7a4a10" stroke-width=".5"/>
<path d="M150.2,29.6 L152,26.5 L153.8,28.3 Z" fill="#e8b080"/>
<path d="M159.5,19 L160.8,17.8 L162.4,19.4 L161.3,20.8 Z" fill="#f3a010"/>
</g>
<use href="#tsk" x="48"/><use href="#tsk" x="96"/><use href="#tsk" x="192"/>
<g id="tex">
<path d="M170.3,20 L172,17.5 H179.6 V29 L177,33 H170.3 Z" fill="#f4f4f4" stroke="#1f3f7a" stroke-width=".9"/>
<path d="M170.8,20 H177.5 V29.2 H170.8 Z" fill="#9cc0e6"/>
<path d="M171.2,19.5 L172.4,18 H179 L177.8,19.5 Z" fill="#d6e8f6"/>
<path d="M177.5,20 L179.3,17.8 V28.6 L177.5,30 Z" fill="#7aa8d8"/>
<path d="M170.3,29.2 H177.5 L179.6,27.5 M177.5,29.2 V33" fill="none" stroke="#333" stroke-width=".7"/>
<path d="M183.5,18 V31 M181.3,20.6 L183.5,18 L185.7,20.6" fill="none" stroke="#333" stroke-width="1.1"/>
</g>
<use href="#tex" x="48"/><use href="#tex" x="96"/><use href="#tex" x="192"/>
<g id="tfi">
<path d="M290.5,24 L296,17.5 H301 L305.5,22 V32 H293 L290.5,29 Z" fill="#f0f0f0" stroke="#333" stroke-width=".9"/>
<path d="M291,24 L296.5,18 L301,22.5 L295.5,28 Z" fill="#9fc3e8" stroke="#333" stroke-width=".8"/>
</g>
<use href="#tfi" x="24"/>
<path d="M154.5,37 V42 H370.5 V37 M178,37 V42 M202,37 V42 M226,37 V42 M250,37 V42 M274,37 V42 M298,37 V42 M322,37 V42 M346,37 V42" fill="none" stroke="#666" stroke-width="1.6"/>
<path d="M376,11 H388.5 V14 L383.3,17 V43 H381.8 V17 L376,14 Z" fill="#6a6a6a"/>
<!-- gear -->
<path d="M1587.16,22.49 L1589.17,22.67 L1589.17,25.33 L1587.16,25.51 L1586.87,26.22 L1588.15,27.78 L1586.28,29.65 L1584.72,28.37 L1584.01,28.66 L1583.83,30.67 L1581.17,30.67 L1580.99,28.66 L1580.28,28.37 L1578.72,29.65 L1576.85,27.78 L1578.13,26.22 L1577.84,25.51 L1575.83,25.33 L1575.83,22.67 L1577.84,22.49 L1578.13,21.78 L1576.85,20.22 L1578.72,18.35 L1580.28,19.63 L1580.99,19.34 L1581.17,17.33 L1583.83,17.33 L1584.01,19.34 L1584.72,19.63 L1586.28,18.35 L1588.15,20.22 L1586.87,21.78 Z" fill="#505050"/><circle cx="1582.5" cy="24" r="2.2" fill="#cdcdcd"/>
</svg>

<svg style="left:1480px;top:75px" width="120" height="120">
<defs>
<radialGradient id="gSh" cx=".5" cy=".5" r=".5"><stop offset="0" stop-color="#000" stop-opacity=".18"/><stop offset="1" stop-color="#000" stop-opacity="0"/></radialGradient>
<linearGradient id="gCf" x1="0" y1="0" x2="1" y2="1"><stop offset="0" stop-color="#f4f4f4"/><stop offset="1" stop-color="#d8d8d8"/></linearGradient>
</defs>
<ellipse cx="58" cy="95" rx="42" ry="18" fill="url(#gSh)"/>
<path d="M56.5,27.9 L91.4,43.2 L87.9,81.6 L56.5,103.2 L25.1,82.3 L21.6,43.2 Z" fill="url(#gCf)" stroke="#888" stroke-width=".8"/>
<path d="M56.5,27.9 L91.4,43.2 L56.5,62.8 L21.6,43.2 Z" fill="#ececec" stroke="#999" stroke-width=".8"/>
<path d="M56.5,62.8 V103.2" stroke="#888" stroke-width=".8"/>
<path d="M56.5,27.9 V21" stroke="#9a9a9a" stroke-width="1.5"/>
<path d="M25.1,82.3 L20,85" stroke="#4a86e0" stroke-width="1.5"/>
<path d="M87.9,81.6 L93,84" stroke="#e89a40" stroke-width="1.5"/>
<text x="56.5" y="19" font-size="10.5" font-weight="700" fill="#a8a8a8" text-anchor="middle" font-family="Liberation Sans">Y</text>
<text x="14" y="93.5" font-size="11" font-weight="700" fill="#4a86e0" font-family="Liberation Sans">Z</text>
<text x="95" y="93.5" font-size="11" font-weight="700" fill="#e89a40" font-family="Liberation Sans">X</text>
<text transform="translate(48,45) rotate(24)" font-size="7.5" fill="#8a8a8a" font-weight="700" font-family="Liberation Sans">TOP</text>
<text transform="translate(28,70) rotate(24) skewX(10)" font-size="8.5" fill="#8a8a8a" font-weight="700" font-family="Liberation Sans">FRONT</text>
<text transform="translate(64,89) rotate(-28)" font-size="8.5" fill="#8a8a8a" font-weight="700" font-family="Liberation Sans">RIGHT</text>
</svg>



</body></html>
